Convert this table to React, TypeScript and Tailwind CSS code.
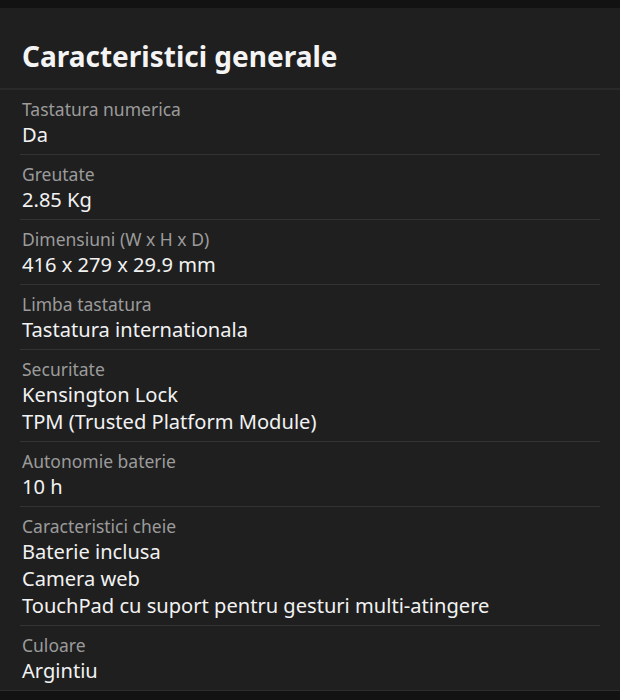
const specs: { label: string; values: string[] }[] = [
  { label: "Tastatura numerica", values: ["Da"] },
  { label: "Greutate", values: ["2.85 Kg"] },
  { label: "Dimensiuni (W x H x D)", values: ["416 x 279 x 29.9 mm"] },
  { label: "Limba tastatura", values: ["Tastatura internationala"] },
  { label: "Securitate", values: ["Kensington Lock", "TPM (Trusted Platform Module)"] },
  { label: "Autonomie baterie", values: ["10 h"] },
  {
    label: "Caracteristici cheie",
    values: ["Baterie inclusa", "Camera web", "TouchPad cu suport pentru gesturi multi-atingere"],
  },
  { label: "Culoare", values: ["Argintiu"] },
];

export default function App() {
  return (
    <div
      className="min-h-[700px] bg-[#121212] pt-[8px] pb-[9px]"
      style={{ fontFamily: '"Noto Sans", "Open Sans", sans-serif' }}
    >
      <div className="bg-[#1f1f1f] border-b border-[#2c2c2c]">
        <header className="px-[22px] pt-[30px] pb-[14px] border-b-2 border-[#2a2a2a]">
          <h1 className="text-[28px] leading-[36px] font-bold text-[#f4f4f4]">
            Caracteristici generale
          </h1>
        </header>
        <div>
          {specs.map((s, i) => (
            <div
              key={s.label}
              className={
                "mx-[20px] px-[2px] pt-[7px] pb-[6px] " +
                (i < specs.length - 1 ? "border-b border-[#333333]" : "")
              }
            >
              <div className="text-[17.5px] leading-[24px] text-[#9b9b9b]">{s.label}</div>
              {s.values.map((v) => (
                <div key={v} className="text-[20.1px] leading-[27px] text-[#f2f2f2]">
                  {v}
                </div>
              ))}
            </div>
          ))}
        </div>
      </div>
    </div>
  );
}
